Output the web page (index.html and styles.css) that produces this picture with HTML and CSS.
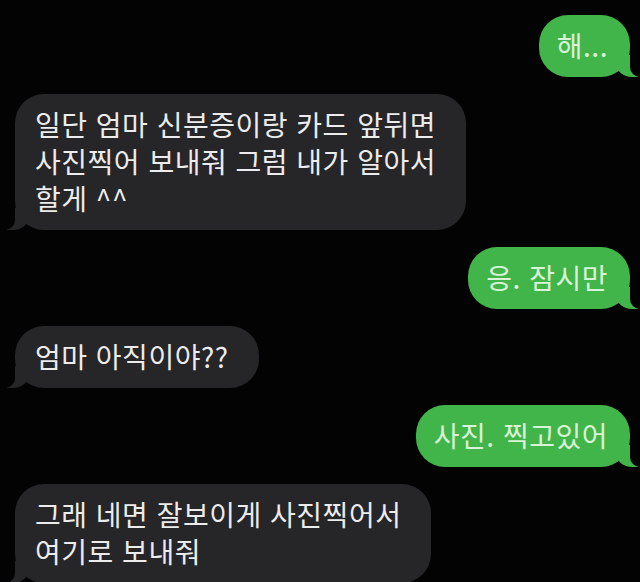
FILE: index.html
```html
<!DOCTYPE html>
<html lang="ko">
<head>
<meta charset="utf-8">
<link rel="stylesheet" href="styles.css">
</head>
<body>
<div class="chat">
  <div class="row out"><div class="bubble sent">해...</div></div>
  <div class="row in"><div class="bubble recv">일단 엄마 신분증이랑 카드 앞뒤면<br>사진찍어 보내줘 그럼 내가 알아서<br>할게 ^^</div></div>
  <div class="row out"><div class="bubble sent">응. 잠시만</div></div>
  <div class="row in"><div class="bubble recv">엄마 아직이야??</div></div>
  <div class="row out"><div class="bubble sent">사진. 찍고있어</div></div>
  <div class="row in"><div class="bubble recv">그래 네면 잘보이게 사진찍어서<br>여기로 보내줘</div></div>
</div>
</body>
</html>
```

FILE: styles.css
```css
html, body {
  margin: 0;
  padding: 0;
  background: #030303;
  height: 100%;
  overflow: hidden;
}
.chat {
  display: flex;
  flex-direction: column;
  gap: 17px;
  padding: 15px 10px 0 15px;
  font-family: "Noto Sans CJK KR", "Noto Sans", sans-serif;
  font-size: 28px;
  letter-spacing: 0.5px;
}
.row {
  display: flex;
}
.row.out { justify-content: flex-end; }
.row.in { justify-content: flex-start; }
.bubble {
  position: relative;
  padding: 12px 22px 13px 18px;
  line-height: 37px;
  border-radius: 29px;
  white-space: nowrap;
}
.sent {
  background: #42b54a;
  color: #d9f3d6;
}
.recv {
  background: #262528;
  color: #ececec;
  padding-left: 20px;
  padding-right: 30px;
}
.sent::before {
  content: "";
  position: absolute;
  bottom: 0;
  right: -8px;
  width: 22px;
  height: 22px;
  background: #42b54a;
  border-bottom-left-radius: 16px 14px;
}
.sent::after {
  content: "";
  position: absolute;
  bottom: 0;
  right: -12px;
  width: 12px;
  height: 24px;
  background: #030303;
  border-bottom-left-radius: 10px;
}
.recv::before {
  content: "";
  position: absolute;
  bottom: 0;
  left: -8px;
  width: 22px;
  height: 22px;
  background: #262528;
  border-bottom-right-radius: 16px 14px;
}
.recv::after {
  content: "";
  position: absolute;
  bottom: 0;
  left: -12px;
  width: 12px;
  height: 24px;
  background: #030303;
  border-bottom-right-radius: 10px;
}
```
